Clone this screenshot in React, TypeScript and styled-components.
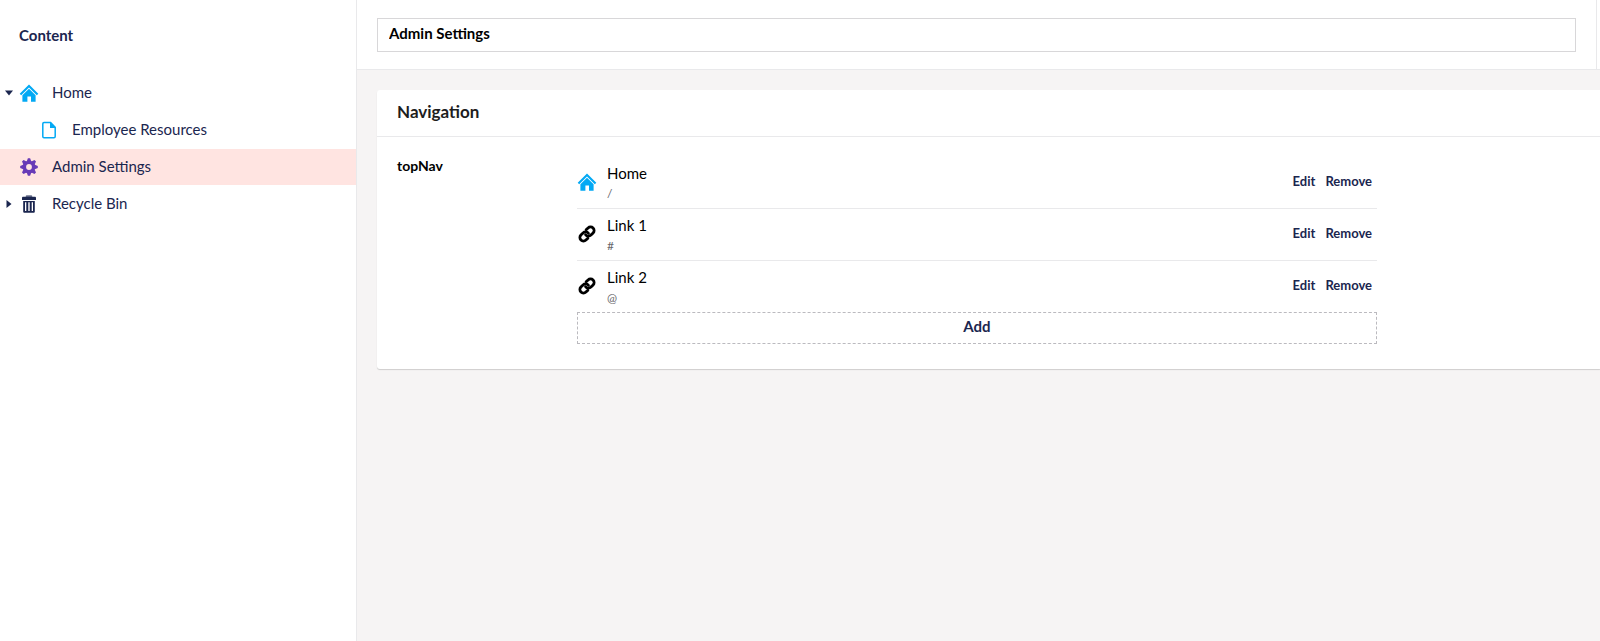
import React from "react";
import styled, { createGlobalStyle } from "styled-components";

const GlobalStyle = createGlobalStyle`
  *, *::before, *::after { box-sizing: border-box; }
  body {
    margin: 0;
    font-family: Lato, "Open Sans", sans-serif;
    font-size: 15px;
    line-height: 20px;
    color: #000;
    background: #f6f4f4;
  }
  button, input { font: inherit; color: inherit; }
  h1, h2, p, ul { margin: 0; padding: 0; }
  ul { list-style: none; }
`;

const Shell = styled.div`
  display: flex;
  min-height: 100vh;
  overflow: hidden;
`;

const Sidebar = styled.nav`
  flex: 0 0 357px;
  background: #fff;
  border-right: 1px solid #e9e9eb;
  color: #1b264f;
`;

const SidebarTitle = styled.h1`
  display: flex;
  align-items: center;
  height: 70px;
  margin-bottom: 5px;
  padding-left: 19px;
  font-size: 15px;
  font-weight: 700;
`;

const TreeItem = styled.li<{ $active?: boolean; $level?: number }>`
  display: flex;
  align-items: center;
  height: 36px;
  margin-bottom: 1px;
  padding-left: ${({ $level = 0 }) => $level * 20}px;
  background: ${({ $active }) => ($active ? "#ffe4e1" : "transparent")};
`;

const Expander = styled.button`
  display: flex;
  align-items: center;
  justify-content: center;
  width: 18px;
  height: 20px;
  padding: 0;
  border: 0;
  background: none;
`;

const ExpanderSpace = styled.span`
  width: 18px;
`;

const TreeLink = styled.a`
  display: flex;
  align-items: center;
  flex: 1;
  gap: 13px;
  padding-left: 1px;
  color: inherit;
  text-decoration: none;
`;

const TreeLabel = styled.span`
  padding-bottom: 2px;
`;

const Icon = styled.svg`
  display: block;
  flex: none;
  width: 20px;
  height: 20px;
`;

const Main = styled.main`
  flex: 1;
  min-width: 0;
`;

const EditorHeader = styled.header`
  display: flex;
  height: 70px;
  background: #fff;
  border-bottom: 1px solid #e9e9eb;
`;

const NameArea = styled.div`
  display: flex;
  align-items: center;
  flex: 1;
  padding: 0 20px;
  border-right: 1px solid #e9e9eb;
`;

const HeaderEdge = styled.div`
  width: 3px;
`;

const NameInput = styled.input`
  width: 100%;
  height: 34px;
  padding: 0 11px 4px;
  border: 1px solid #d8d7d9;
  border-radius: 0;
  background: #fff;
  font-weight: 700;
  outline: 0;
`;

const Card = styled.section`
  margin: 20px 0 20px 20px;
  background: #fff;
  border-radius: 3px 0 0 3px;
  box-shadow: 0 1px 1px 0 rgba(0, 0, 0, 0.16);
`;

const CardTitle = styled.h2`
  display: flex;
  align-items: center;
  height: 47px;
  padding: 0 20px 2px;
  border-bottom: 1px solid #e9e9eb;
  font-size: 17px;
  font-weight: 700;
  color: #1d1d1d;
`;

const Property = styled.div`
  display: flex;
  padding: 20px 20px 25px;
`;

const PropertyLabel = styled.div`
  flex: 0 0 180px;
  font-size: 14px;
  font-weight: 700;
  line-height: 18px;
`;

const Picker = styled.div`
  flex: 0 1 800px;
`;

const LinkRow = styled.li`
  display: flex;
  align-items: center;
  height: 52px;
  gap: 10px;
  padding: 0 5px 2px 0;
  border-bottom: 1px solid #e9e9eb;

  &:last-child {
    height: 51px;
    border-bottom: 0;
  }
`;

const LinkText = styled.div`
  flex: 1;
  align-self: stretch;
  padding-top: 6px;
`;

const LinkUrl = styled.p`
  font-size: 12px;
  line-height: 20px;
  color: #68676b;
`;

const LinkName = styled.p`
  line-height: 21px;
`;

const Actions = styled.div`
  display: flex;
  gap: 10px;
  padding-bottom: 2px;
`;

const ActionButton = styled.button`
  padding: 0;
  border: 0;
  background: none;
  font-size: 13px;
  font-weight: 700;
  color: #1b264f;
`;

const AddButton = styled.button`
  display: block;
  width: 100%;
  height: 32px;
  padding: 0 0 4px;
  border: 1px dashed #bbbabf;
  background: none;
  font-weight: 700;
  color: #1b264f;
`;

const HomeIcon = () => (
  <Icon viewBox="0 0 20 20" fill="#03a9f4" aria-hidden="true">
    <path d="M10 1.6 19.3 10.7 17.8 12.2 10 4.6 2.2 12.2.7 10.7Z" />
    <path d="M10 5.8 16.6 12.2V18.8H12V13.6H8.4V18.8H3.4V12.2Z" />
  </Icon>
);

const DocumentIcon = () => (
  <Icon viewBox="0 0 20 20" aria-hidden="true">
    <path
      d="M5 2.6H11.6L16.2 7.2V16.5Q16.2 17.7 15 17.7H5Q3.8 17.7 3.8 16.5V3.8Q3.8 2.6 5 2.6Z"
      fill="none"
      stroke="#03a9f4"
      strokeWidth="1.5"
    />
    <path d="M11 2V7.9H16.8Z" fill="#03a9f4" />
  </Icon>
);

const GearIcon = () => (
  <Icon viewBox="-10 -10 20 20" aria-hidden="true">
    <circle r="4.6" fill="none" stroke="#673ab7" strokeWidth="3.4" />
    {[0, 45, 90, 135, 180, 225, 270, 315].map((angle) => (
      <path
        key={angle}
        d="M-2.4-5.2-1.1-8.8H1.1L2.4-5.2Z"
        fill="#673ab7"
        transform={`rotate(${angle})`}
      />
    ))}
  </Icon>
);

const TrashIcon = () => (
  <Icon viewBox="0 0 20 20" fill="#1b264f" aria-hidden="true">
    <path d="M6.8 3V2.1Q6.8 1.3 7.7 1.3H12.3Q13.2 1.3 13.2 2.1V3Z" fillOpacity="0.65" />
    <path d="M3.9 2.8H16.1Q17 2.8 17 3.7V6H3V3.7Q3 2.8 3.9 2.8Z" />
    <path
      fillRule="evenodd"
      d="M4.2 7H15.8V17.7Q15.8 18.7 14.8 18.7H5.2Q4.2 18.7 4.2 17.7ZM6 8.2V17H7.3V8.2ZM9.3 8.2V17H10.7V8.2ZM12.7 8.2V17H14V8.2Z"
    />
  </Icon>
);

const ChainIcon = () => (
  <Icon
    viewBox="-2 -2 28 28"
    fill="none"
    stroke="#000"
    strokeWidth="3.9"
    strokeLinecap="round"
    strokeLinejoin="round"
    aria-hidden="true"
  >
    <path d="M10 13a5 5 0 0 0 7.54.54l3-3a5 5 0 0 0-7.07-7.07l-2.7 2.7" />
    <path d="M14 11a5 5 0 0 0-7.54-.54l-3 3a5 5 0 0 0 7.07 7.07l2.7-2.7" />
  </Icon>
);

const Caret = ({ open }: { open?: boolean }) => (
  <svg width="10" height="10" viewBox="0 0 10 10" fill="#1b264f" aria-hidden="true">
    <path d={open ? "M1 2.5H9L5 7.5Z" : "M2.5 1 7.5 5 2.5 9Z"} />
  </svg>
);

const links = [
  { name: "Home", url: "/", icon: <HomeIcon /> },
  { name: "Link 1", url: "#", icon: <ChainIcon /> },
  { name: "Link 2", url: "@", icon: <ChainIcon /> },
];

export default function App() {
  return (
    <>
      <GlobalStyle />
      <Shell>
        <Sidebar aria-label="Content">
          <SidebarTitle>Content</SidebarTitle>
          <ul>
            <TreeItem>
              <Expander type="button" aria-label="Collapse Home">
                <Caret open />
              </Expander>
              <TreeLink href="#home">
                <HomeIcon />
                <TreeLabel>Home</TreeLabel>
              </TreeLink>
            </TreeItem>
            <TreeItem $level={1}>
              <ExpanderSpace />
              <TreeLink href="#employee-resources">
                <DocumentIcon />
                <TreeLabel>Employee Resources</TreeLabel>
              </TreeLink>
            </TreeItem>
            <TreeItem $active>
              <ExpanderSpace />
              <TreeLink href="#admin-settings" aria-current="page">
                <GearIcon />
                <TreeLabel>Admin Settings</TreeLabel>
              </TreeLink>
            </TreeItem>
            <TreeItem>
              <Expander type="button" aria-label="Expand Recycle Bin">
                <Caret />
              </Expander>
              <TreeLink href="#recycle-bin">
                <TrashIcon />
                <TreeLabel>Recycle Bin</TreeLabel>
              </TreeLink>
            </TreeItem>
          </ul>
        </Sidebar>
        <Main>
          <EditorHeader>
            <NameArea>
              <NameInput aria-label="Name" defaultValue="Admin Settings" />
            </NameArea>
            <HeaderEdge />
          </EditorHeader>
          <Card>
            <CardTitle>Navigation</CardTitle>
            <Property>
              <PropertyLabel id="top-nav-label">topNav</PropertyLabel>
              <Picker role="group" aria-labelledby="top-nav-label">
                <ul>
                  {links.map((link) => (
                    <LinkRow key={link.name}>
                      {link.icon}
                      <LinkText>
                        <LinkName>{link.name}</LinkName>
                        <LinkUrl>{link.url}</LinkUrl>
                      </LinkText>
                      <Actions>
                        <ActionButton type="button">Edit</ActionButton>
                        <ActionButton type="button">Remove</ActionButton>
                      </Actions>
                    </LinkRow>
                  ))}
                </ul>
                <AddButton type="button">Add</AddButton>
              </Picker>
            </Property>
          </Card>
        </Main>
      </Shell>
    </>
  );
}
